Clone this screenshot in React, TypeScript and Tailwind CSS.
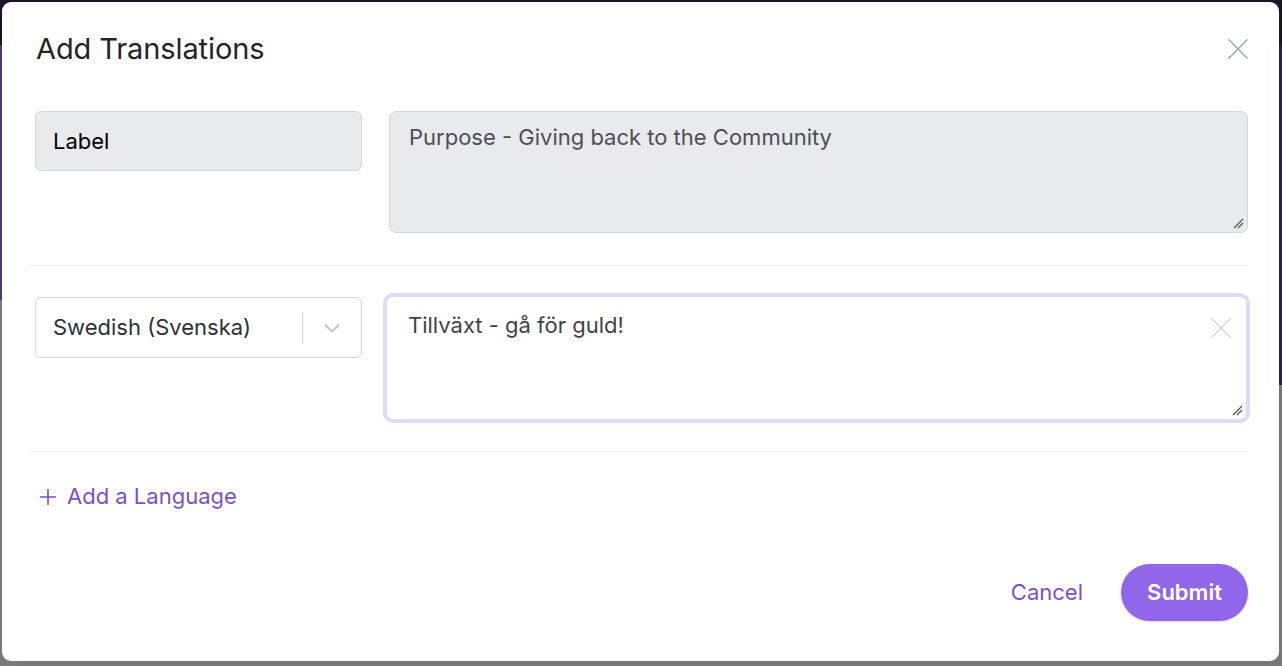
import React from "react";

function XIcon({ className }: { className?: string }) {
  return (
    <svg viewBox="0 0 24 24" className={className} fill="none" stroke="currentColor" strokeWidth={1.5} strokeLinecap="round">
      <path d="M2 2L22 22M22 2L2 22" />
    </svg>
  );
}

function ResizeHandle() {
  return (
    <svg viewBox="0 0 12 12" className="absolute right-[3px] bottom-[3px] h-[12px] w-[12px]" stroke="#555" strokeWidth={1.3}>
      <path d="M2 11L11 2M6 11L11 6" />
    </svg>
  );
}

export default function App() {
  return (
    <div className="relative h-[666px] w-full overflow-hidden" style={{ fontFamily: "Inter, 'Noto Sans', sans-serif" }}>
      {/* backdrop */}
      <div className="flex h-full w-full flex-col">
        <div className="h-[45px] bg-[#1b1429]" />
        <div className="flex flex-1">
          <div className="flex w-[20px] flex-col">
            <div className="h-[255px] bg-[#4b3b70]" />
            <div className="flex-1 bg-[#7a7a7a]" />
          </div>
          <div className="flex flex-1 flex-col">
            <div className="h-[340px] bg-[#2a2040]" />
            <div className="flex-1 bg-[#777777]" />
          </div>
          <div className="flex w-[20px] flex-col">
            <div className="h-[340px] bg-[#2a1f45]" />
            <div className="flex-1 bg-[#777777]" />
          </div>
        </div>
      </div>

      {/* modal */}
      <div className="absolute left-[2px] top-[2px] flex h-[659px] w-[1277px] flex-col rounded-[9px] bg-white pl-[26px] pr-[31px] text-[#212529]">
        <div className="flex h-[92px] items-center justify-between pl-[8px] pt-[1px]">
          <h1 className="text-[29px] font-normal tracking-[-0.1px] text-[#212529]">Add Translations</h1>
          <button className="mr-[-1px] text-[#9ca3af]">
            <XIcon className="h-[22px] w-[22px]" />
          </button>
        </div>

        {/* row 1 */}
        <div className="flex gap-[27px] pb-[32px] pl-[7px] pt-[17px] border-b border-[#eeeeee]">
          <div className="flex h-[60px] w-[327px] items-center rounded-[6px] border border-[#d4d6db] bg-[#e9eaee] px-[17px] text-[22px] text-black">
            Label
          </div>
          <div className="relative h-[122px] flex-1 rounded-[7px] border border-[#d4d6db] bg-[#e9eaee] px-[19px] pt-[9px] text-[22px] text-[#4b4f57]">
            Purpose - Giving back to the Community
            <ResizeHandle />
          </div>
        </div>

        {/* row 2 */}
        <div className="flex gap-[21px] pb-[28px] pl-[7px] pt-[27px] border-b border-[#eeeeee]">
          <div className="mt-[4px] flex h-[61px] w-[327px] items-center rounded-[6px] border border-[#d4d6db] bg-white pl-[17px] text-[22px] text-[#2d3138]">
            <span className="flex-1">Swedish (Svenska)</span>
            <div className="h-[32px] w-px bg-[#d0d0d0]" />
            <div className="flex w-[58px] justify-center text-[#c8c8c8]">
              <svg viewBox="0 0 20 20" className="h-[22px] w-[22px]" fill="none" stroke="currentColor" strokeWidth={2} strokeLinecap="round" strokeLinejoin="round">
                <path d="M4 7.5L10 13L16 7.5" />
              </svg>
            </div>
          </div>
          <div className="relative mr-[-2px] h-[130px] flex-1 rounded-[10px] border-[4px] border-[#e2daf9] bg-white pl-[21px] pt-[12px] text-[22px] text-[#3f434a]">
            Tillväxt - gå för guld!
            <XIcon className="absolute right-[14px] top-[20px] h-[22px] w-[22px] text-[#d3d5da]" />
            <ResizeHandle />
          </div>
        </div>

        <div className="flex items-center pl-[11px] pt-[28px] text-[22px] text-[#7a52cc]">
          <svg viewBox="0 0 20 20" className="mr-[10px] h-[18px] w-[18px]" fill="none" stroke="currentColor" strokeWidth={1.8}>
            <path d="M10 1V19M1 10H19" />
          </svg>
          <span>Add a Language</span>
        </div>

        <div className="mt-auto flex items-center justify-end gap-[38px] pb-[40px]">
          <button className="text-[22px] text-[#7a52cc]">Cancel</button>
          <button className="h-[57px] w-[127px] rounded-full bg-[#9166e8] text-[22px] font-semibold text-white shadow-[0_1px_3px_rgba(0,0,0,0.15)]">
            Submit
          </button>
        </div>
      </div>
    </div>
  );
}
